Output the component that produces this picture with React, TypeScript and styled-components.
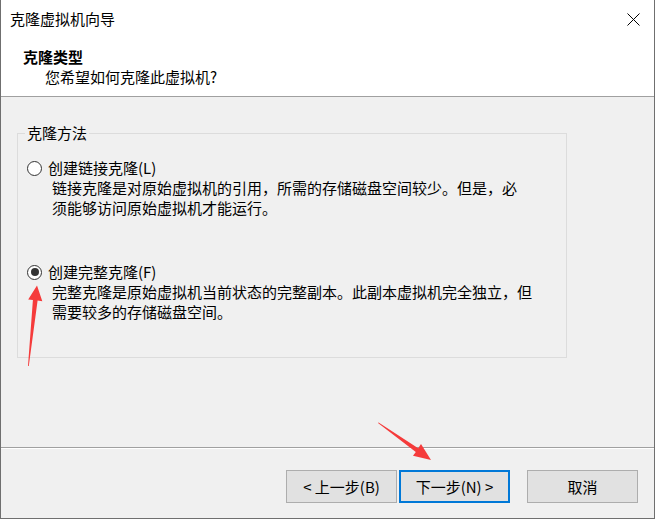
import styled, { createGlobalStyle } from 'styled-components';

const GlobalStyle = createGlobalStyle`
  html, body {
    margin: 0;
    padding: 0;
    background: #f0f0f0;
  }
  body {
    font-family: "Noto Sans CJK SC", "Noto Sans", sans-serif;
    font-size: 15px;
    color: #000;
  }
`;

const S_Window = styled.div`
  position: relative;
  box-sizing: border-box;
  width: 655px;
  height: 519px;
  background-color: #f0f0f0;
  border-left: 1px solid #6f6f6f;
  border-right: 1px solid #6f6f6f;
  border-bottom: 1px solid #6f6f6f;
  display: flex;
  flex-direction: column;
  overflow: hidden;
`;

const S_TitleBar = styled.div`
  height: 38px;
  background-color: #fff;
  display: flex;
  align-items: center;
  justify-content: space-between;
  padding: 0 14px 0 9px;
  line-height: 20px;
`;

const S_CloseBtn = styled.button`
  width: 14px;
  height: 14px;
  padding: 0;
  border: none;
  background: transparent;
  display: flex;
  align-items: center;
  justify-content: center;
`;

const S_Header = styled.div`
  background-color: #fff;
  padding: 9px 0 9px 22px;
  border-bottom: 1px solid #a0a0a0;
  line-height: 20px;

  & > h1 {
    margin: 0;
    font-size: 15px;
    font-weight: 700;
  }
  & > p {
    margin: 0;
    padding-left: 22px;
  }
`;

const S_Content = styled.div`
  flex-grow: 1;
  padding: 26px 0 0 16px;
`;

const S_GroupBox = styled.fieldset`
  box-sizing: border-box;
  width: 550px;
  margin: 0;
  padding: 0 0 35px 7px;
  border: 1px solid #dcdcdc;
  min-inline-size: 0;

  & > legend {
    padding: 0 2px;
    line-height: 20px;
  }
`;

const S_Option = styled.div<{ $gap: number }>`
  margin-top: ${(p) => p.$gap}px;
  line-height: 20px;
`;

const S_OptionRow = styled.label`
  display: flex;
  align-items: center;
  padding-left: 2px;
`;

const S_Radio = styled.span<{ $checked?: boolean }>`
  box-sizing: border-box;
  width: 15px;
  height: 15px;
  margin-right: 6px;
  border-radius: 50%;
  border: 1px solid #333;
  background-color: #fff;
  display: flex;
  align-items: center;
  justify-content: center;

  &::after {
    content: '';
    display: ${(p) => (p.$checked ? 'block' : 'none')};
    width: 8px;
    height: 8px;
    border-radius: 50%;
    background-color: #333;
  }
`;

const S_OptionDesc = styled.p`
  margin: 0;
  padding-left: 27px;
`;

const S_Footer = styled.div`
  height: 71px;
  box-sizing: border-box;
  border-top: 1px solid #a0a0a0;
  box-shadow: inset 0 1px 0 #fff;
  padding: 22px 16px 0 0;
  display: flex;
  justify-content: flex-end;
  align-items: flex-start;
`;

const S_Button = styled.button<{ $focused?: boolean; $space?: number }>`
  box-sizing: border-box;
  width: 111px;
  height: 33px;
  margin-left: ${(p) => p.$space ?? 0}px;
  background-color: #e1e1e1;
  border: ${(p) => (p.$focused ? '2px solid #0078d7' : '1px solid #adadad')};
  font-family: inherit;
  font-size: 15px;
  color: #000;
  padding: 0;
`;

const S_Overlay = styled.svg`
  position: absolute;
  left: 0;
  top: 0;
  pointer-events: none;
`;

function App() {
  return (
    <>
      <GlobalStyle />
      <S_Window>
        <S_TitleBar>
          <span>克隆虚拟机向导</span>
          <S_CloseBtn aria-label='关闭'>
            <svg width='13' height='13' viewBox='0 0 13 13'>
              <path d='M0.5 0.5 L12.5 12.5 M12.5 0.5 L0.5 12.5' stroke='#000' strokeWidth='1' fill='none' />
            </svg>
          </S_CloseBtn>
        </S_TitleBar>
        <S_Header>
          <h1>克隆类型</h1>
          <p>您希望如何克隆此虚拟机?</p>
        </S_Header>
        <S_Content>
          <S_GroupBox>
            <legend>克隆方法</legend>
            <S_Option $gap={15}>
              <S_OptionRow>
                <S_Radio />
                创建链接克隆(L)
              </S_OptionRow>
              <S_OptionDesc>
                链接克隆是对原始虚拟机的引用，所需的存储磁盘空间较少。但是，必
                <br />
                须能够访问原始虚拟机才能运行。
              </S_OptionDesc>
            </S_Option>
            <S_Option $gap={44}>
              <S_OptionRow>
                <S_Radio $checked />
                创建完整克隆(F)
              </S_OptionRow>
              <S_OptionDesc>
                完整克隆是原始虚拟机当前状态的完整副本。此副本虚拟机完全独立，但
                <br />
                需要较多的存储磁盘空间。
              </S_OptionDesc>
            </S_Option>
          </S_GroupBox>
        </S_Content>
        <S_Footer>
          <S_Button>&lt; 上一步(B)</S_Button>
          <S_Button $focused $space={2}>
            下一步(N) &gt;
          </S_Button>
          <S_Button $space={17}>取消</S_Button>
        </S_Footer>
        <S_Overlay width='655' height='519' viewBox='0 0 655 519'>
          <polygon
            points='27,366 31.9,300.1 27.2,299.6 36,285.5 41.3,301.2 36.6,300.6 27.8,366'
            fill='#f53b3b'
          />
          <polygon
            points='377,423 414.8,452 412,455.8 430,460 420,444 417.2,448.2 377.6,422.4'
            fill='#f53b3b'
          />
        </S_Overlay>
      </S_Window>
    </>
  );
}

export default App;
